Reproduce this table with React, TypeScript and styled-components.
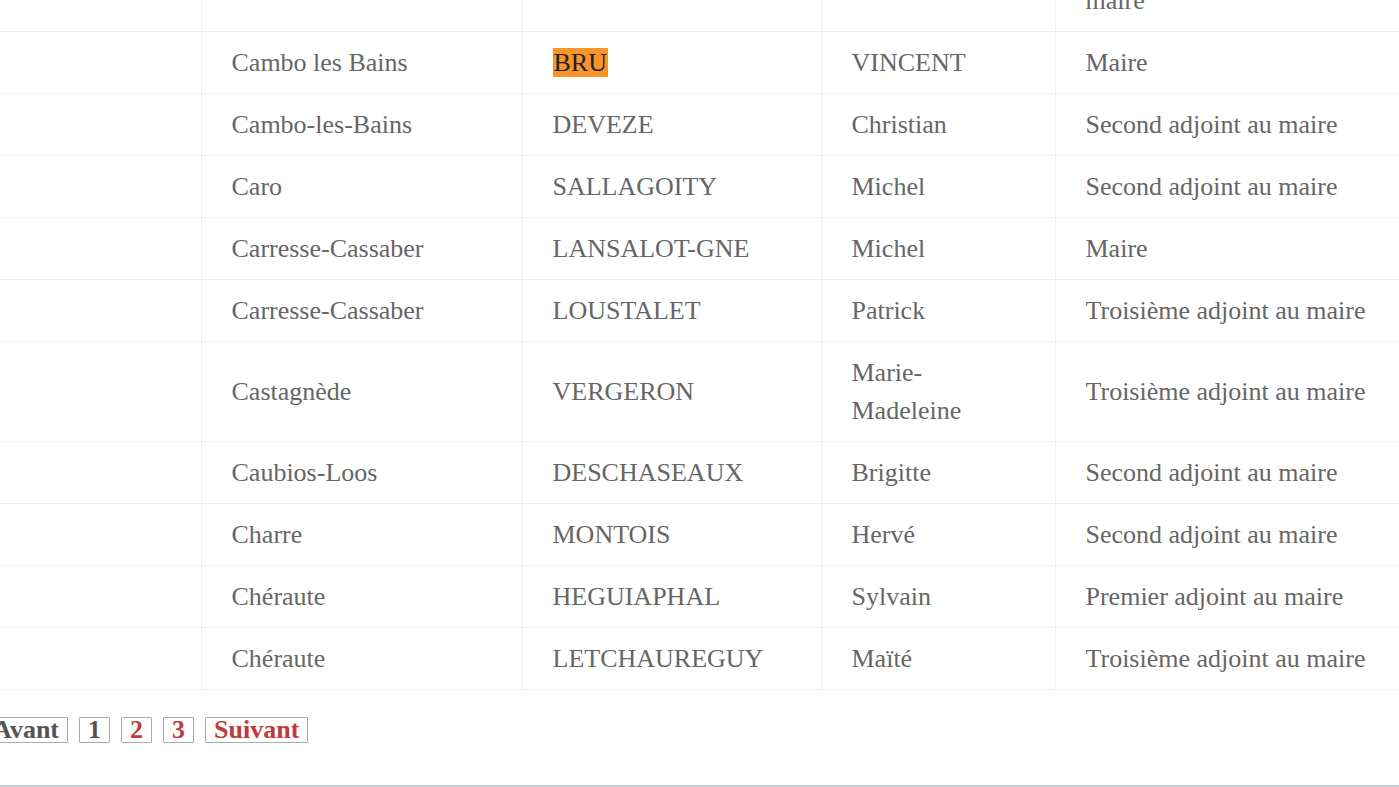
import styled, { createGlobalStyle } from 'styled-components';

const GlobalStyle = createGlobalStyle`
  html, body {
    margin: 0;
    padding: 0;
    background: #fff;
  }
  body {
    font-family: 'Liberation Serif', 'DejaVu Serif', serif;
    overflow: hidden;
  }
`;

const Page = styled.div`
  width: 1399px;
  height: 787px;
  overflow: hidden;
  display: flex;
  flex-direction: column;
  border-bottom: 2px solid #c9cdd5;
  box-sizing: border-box;
`;

const TableClip = styled.div`
  margin-top: -68px;
  margin-left: -100px;
`;

const Table = styled.table`
  border-collapse: collapse;
  table-layout: fixed;
  width: 1520px;
  font-size: 26px;
  color: #666;
`;

const Col = styled.col<{ $w: number }>`
  width: ${(p) => p.$w}px;
`;

const Row = styled.tr`
  border-bottom: 1px solid #eee;
`;

const Cell = styled.td`
  padding: 11.5px 30px;
  line-height: 38px;
  vertical-align: middle;
  border-left: 1px solid #eee;
  &:first-child {
    border-left: none;
  }
`;

const Mark = styled.mark`
  background: #f7942a;
  color: #222;
  padding: 0 1px;
`;

const Pager = styled.nav`
  display: flex;
  align-items: center;
  gap: 11px;
  margin-top: 27px;
  margin-left: -34px;
`;

const PageButton = styled.a<{ $muted?: boolean }>`
  display: inline-flex;
  align-items: center;
  justify-content: center;
  height: 26px;
  min-width: 28px;
  padding: 0 8px;
  box-sizing: border-box;
  border: 1px solid #aaa;
  border-radius: 1px;
  font-weight: bold;
  font-size: 26px;
  line-height: 1;
  color: ${(p) => (p.$muted ? '#555' : '#c0393b')};
  text-decoration: none;
`;

type Entry = {
  commune: string;
  nom: React.ReactNode;
  prenom: React.ReactNode;
  fonction: React.ReactNode;
};

const rows: Entry[] = [
  {
    commune: '',
    nom: '',
    prenom: '',
    fonction: (
      <>
        Quatrième adjoint au
        <br />
        maire
      </>
    ),
  },
  { commune: 'Cambo les Bains', nom: <Mark>BRU</Mark>, prenom: 'VINCENT', fonction: 'Maire' },
  { commune: 'Cambo-les-Bains', nom: 'DEVEZE', prenom: 'Christian', fonction: 'Second adjoint au maire' },
  { commune: 'Caro', nom: 'SALLAGOITY', prenom: 'Michel', fonction: 'Second adjoint au maire' },
  { commune: 'Carresse-Cassaber', nom: 'LANSALOT-GNE', prenom: 'Michel', fonction: 'Maire' },
  { commune: 'Carresse-Cassaber', nom: 'LOUSTALET', prenom: 'Patrick', fonction: 'Troisième adjoint au maire' },
  {
    commune: 'Castagnède',
    nom: 'VERGERON',
    prenom: (
      <>
        Marie-
        <br />
        Madeleine
      </>
    ),
    fonction: 'Troisième adjoint au maire',
  },
  { commune: 'Caubios-Loos', nom: 'DESCHASEAUX', prenom: 'Brigitte', fonction: 'Second adjoint au maire' },
  { commune: 'Charre', nom: 'MONTOIS', prenom: 'Hervé', fonction: 'Second adjoint au maire' },
  { commune: 'Chéraute', nom: 'HEGUIAPHAL', prenom: 'Sylvain', fonction: 'Premier adjoint au maire' },
  { commune: 'Chéraute', nom: 'LETCHAUREGUY', prenom: 'Maïté', fonction: 'Troisième adjoint au maire' },
];

const App = () => (
  <Page>
    <GlobalStyle />
    <TableClip>
      <Table>
        <colgroup>
          <Col $w={301} />
          <Col $w={321} />
          <Col $w={299} />
          <Col $w={234} />
          <Col $w={365} />
        </colgroup>
        <tbody>
          {rows.map((r, i) => (
            <Row key={i}>
              <Cell />
              <Cell>{r.commune}</Cell>
              <Cell>{r.nom}</Cell>
              <Cell>{r.prenom}</Cell>
              <Cell>{r.fonction}</Cell>
            </Row>
          ))}
        </tbody>
      </Table>
    </TableClip>
    <Pager>
      <PageButton $muted>« Avant</PageButton>
      <PageButton $muted>1</PageButton>
      <PageButton href="#">2</PageButton>
      <PageButton href="#">3</PageButton>
      <PageButton href="#">Suivant</PageButton>
    </Pager>
  </Page>
);

export default App;
